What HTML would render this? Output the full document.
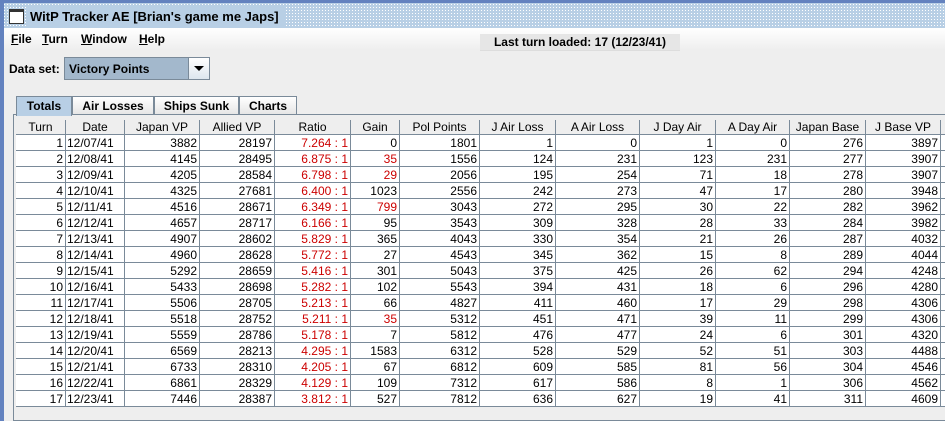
<!DOCTYPE html>
<html><head><style>
html,body{margin:0;width:945px;height:421px;overflow:hidden}
body{background:#eeeeee;font-family:"Liberation Sans",Arial,sans-serif;position:relative}
.title{position:absolute;left:0;top:0;width:945px;height:28px;background:#b8cfe5;border-top:3px solid #6382bf;box-sizing:border-box;
background-image:radial-gradient(#ffffff 0.6px,transparent 0.7px);background-size:3px 3px}
.ttext{position:absolute;left:26px;top:4px;font-size:13px;font-weight:bold;color:#000;background:#b8cfe5;padding:0 6px 0 4px;height:20px;line-height:20px}
.ticon{position:absolute;left:9px;top:6px;width:13px;height:11px;border:1px solid #333;background:#fff;border-top:3px solid #333}
.lb{position:absolute;left:0;top:0;width:4px;height:421px;background:#6382bf}
.menu{position:absolute;left:4px;top:28px;width:941px;height:22px;background:linear-gradient(#fff,#eeeeee);font-size:12px;font-weight:bold}
.menu span{position:absolute;top:4px}
.status{position:absolute;left:480px;top:34px;width:200px;height:16px;background:#e6e6e6;font-size:12px;font-weight:bold;text-align:center;line-height:17px;border-bottom:1px solid #ddd}
.ds{position:absolute;left:9px;top:62px;font-size:12px;font-weight:bold}
.combo{position:absolute;left:64px;top:57px;width:146px;height:23px;border:1px solid #7a8a99;background:#a3b8cc;box-sizing:border-box}
.combo .t{position:absolute;left:4px;top:4px;font-size:12px;font-weight:bold}
.combo .b{position:absolute;right:0;top:0;width:20px;height:21px;background:linear-gradient(#fff,#dde6ee);border-left:1px solid #7a8a99}
.combo .b:after{content:"";position:absolute;left:5px;top:8px;border-left:5px solid transparent;border-right:5px solid transparent;border-top:5px solid #000}
.tab{position:absolute;top:96px;height:18px;border:1px solid #7a8a99;border-bottom:none;background:linear-gradient(#fff,#e6e6e6);font-size:12px;font-weight:bold;text-align:center;line-height:18px;box-sizing:border-box}
.tab.sel{background:#b8cfe5;height:20px}
.panel{position:absolute;left:13px;top:114px;width:940px;height:305px;border:1px solid #7a8a99;background:#eeeeee}
.c{position:absolute;box-sizing:border-box;border-right:1px solid #7a8a99;border-bottom:1px solid #7a8a99;font-size:12px;white-space:nowrap;overflow:hidden;height:16px;line-height:16px;padding-right:2px;text-align:right;background:#fff}
.h{background:#eeeeee;text-align:center;padding:0;height:15px;line-height:15px}
.r{color:#cc0000}
.l{text-align:left;padding-left:1px}
</style></head><body>
<div class="title"><div class="ticon"></div><div class="ttext">WitP Tracker AE [Brian's game me Japs]</div></div>
<div class="lb"></div>
<div class="menu"><span style="left:7px"><u>F</u>ile</span><span style="left:38px"><u>T</u>urn</span><span style="left:77px"><u>W</u>indow</span><span style="left:135px"><u>H</u>elp</span></div>
<div class="status">Last turn loaded: 17 (12/23/41)</div>
<div class="ds">Data set:</div>
<div class="combo"><div class="t">Victory Points</div><div class="b"></div></div>
<div class="panel"></div>
<div class="tab sel" style="left:16px;width:56px">Totals</div>
<div class="tab" style="left:72px;width:82px">Air Losses</div>
<div class="tab" style="left:154px;width:85px">Ships Sunk</div>
<div class="tab" style="left:239px;width:58px">Charts</div>
<div id="t"></div>
<script>
var b=[16,66,125,200,275,351,400,480,556,640,716,790,866,941,960];
var hd=["Turn","Date","Japan VP","Allied VP","Ratio","Gain","Pol Points","J Air Loss","A Air Loss","J Day Air","A Day Air","Japan Base","J Base VP",""];
var d=[
[1,"12/07/41",3882,28197,"7.264 : 1",0,1801,1,0,1,0,276,3897],
[2,"12/08/41",4145,28495,"6.875 : 1","*35",1556,124,231,123,231,277,3907],
[3,"12/09/41",4205,28584,"6.798 : 1","*29",2056,195,254,71,18,278,3907],
[4,"12/10/41",4325,27681,"6.400 : 1",1023,2556,242,273,47,17,280,3948],
[5,"12/11/41",4516,28671,"6.349 : 1","*799",3043,272,295,30,22,282,3962],
[6,"12/12/41",4657,28717,"6.166 : 1",95,3543,309,328,28,33,284,3982],
[7,"12/13/41",4907,28602,"5.829 : 1",365,4043,330,354,21,26,287,4032],
[8,"12/14/41",4960,28628,"5.772 : 1",27,4543,345,362,15,8,289,4044],
[9,"12/15/41",5292,28659,"5.416 : 1",301,5043,375,425,26,62,294,4248],
[10,"12/16/41",5433,28698,"5.282 : 1",102,5543,394,431,18,6,296,4280],
[11,"12/17/41",5506,28705,"5.213 : 1",66,4827,411,460,17,29,298,4306],
[12,"12/18/41",5518,28752,"5.211 : 1","*35",5312,451,471,39,11,299,4306],
[13,"12/19/41",5559,28786,"5.178 : 1",7,5812,476,477,24,6,301,4320],
[14,"12/20/41",6569,28213,"4.295 : 1",1583,6312,528,529,52,51,303,4488],
[15,"12/21/41",6733,28310,"4.205 : 1",67,6812,609,585,81,56,304,4546],
[16,"12/22/41",6861,28329,"4.129 : 1",109,7312,617,586,8,1,306,4562],
[17,"12/23/41",7446,28387,"3.812 : 1",527,7812,636,627,19,41,311,4609]];
var h="";
for(var i=0;i<14;i++){h+='<div class="c h" style="left:'+b[i]+'px;top:120px;width:'+(b[i+1]-b[i])+'px">'+hd[i]+'</div>';}
for(var r=0;r<17;r++){var y=135+r*16;for(var i=0;i<14;i++){var v=i<13?String(d[r][i]):"";var cls="c";
if(i==4)cls+=" r";if(i==1)cls+=" l";if(v.charAt(0)=="*"){v=v.slice(1);cls+=" r";}
h+='<div class="'+cls+'" style="left:'+b[i]+'px;top:'+y+'px;width:'+(b[i+1]-b[i])+'px">'+v+'</div>';}}
document.getElementById("t").innerHTML=h;
</script>
</body></html>
